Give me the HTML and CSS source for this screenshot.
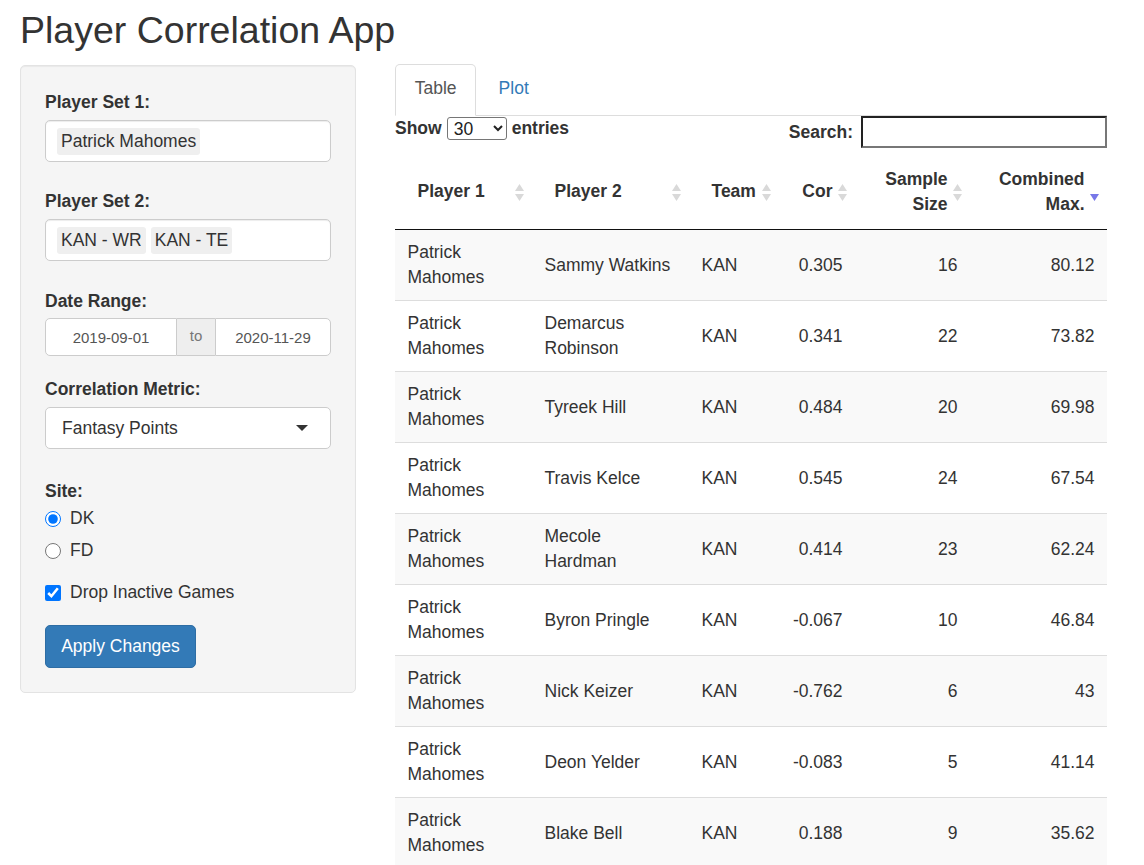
FILE: index.html
```html
<!DOCTYPE html>
<html>
<head>
<meta charset="utf-8">
<title>Player Correlation App</title>
<link rel="stylesheet" href="styles.css">
</head>
<body>
<div class="page">
  <h1 class="title">Player Correlation App</h1>
  <div class="layout">
    <aside class="well">
      <div class="label lbl-first">Player Set 1:</div>
      <div class="selectize">
        <span class="chip">Patrick Mahomes</span>
      </div>

      <div class="label lbl-set2">Player Set 2:</div>
      <div class="selectize">
        <span class="chip">KAN - WR</span><span class="chip">KAN - TE</span>
      </div>

      <div class="label lbl-date">Date Range:</div>
      <div class="daterange">
        <div class="date d1">2019-09-01</div>
        <div class="date-addon">to</div>
        <div class="date d2">2020-11-29</div>
      </div>

      <div class="label lbl-metric">Correlation Metric:</div>
      <div class="select-box">
        <span>Fantasy Points</span>
        <span class="caret"></span>
      </div>

      <div class="label lbl-site">Site:</div>
      <label class="option opt-dk"><input type="radio" name="site" checked> <span>DK</span></label>
      <label class="option opt-fd"><input type="radio" name="site"> <span>FD</span></label>
      <label class="option opt-check"><input type="checkbox" checked> <span>Drop Inactive Games</span></label>

      <button class="btn">Apply Changes</button>
    </aside>

    <main class="main">
      <ul class="tabs">
        <li class="tab active">Table</li>
        <li class="tab link">Plot</li>
      </ul>

      <div class="dt-controls">
        <div class="dt-length">
          <span>Show</span>
          <select class="len-select"><option>30</option></select>
          <span>entries</span>
        </div>
        <div class="dt-filter">
          <span>Search:</span>
          <input class="search" type="text">
        </div>
      </div>

      <table class="dt">
        <colgroup>
          <col class="w1"><col class="w2"><col class="w3"><col class="w4"><col class="w5"><col class="w6">
        </colgroup>
        <thead>
          <tr>
            <th class="l">Player 1<svg class="sort" viewBox="0 0 9 17"><path d="M0 7L4.5 0L9 7Z"/><path d="M0 10H9L4.5 17Z"/></svg></th>
            <th class="l">Player 2<svg class="sort" viewBox="0 0 9 17"><path d="M0 7L4.5 0L9 7Z"/><path d="M0 10H9L4.5 17Z"/></svg></th>
            <th class="l">Team<svg class="sort" viewBox="0 0 9 17"><path d="M0 7L4.5 0L9 7Z"/><path d="M0 10H9L4.5 17Z"/></svg></th>
            <th class="r">Cor<svg class="sort" viewBox="0 0 9 17"><path d="M0 7L4.5 0L9 7Z"/><path d="M0 10H9L4.5 17Z"/></svg></th>
            <th class="r">Sample Size<svg class="sort" viewBox="0 0 9 17"><path d="M0 7L4.5 0L9 7Z"/><path d="M0 10H9L4.5 17Z"/></svg></th>
            <th class="r">Combined Max.<svg class="sort desc" viewBox="0 0 9 17"><path d="M0 10H9L4.5 17Z"/></svg></th>
          </tr>
        </thead>
        <tbody>
          <tr><td>Patrick Mahomes</td><td>Sammy Watkins</td><td>KAN</td><td class="r">0.305</td><td class="r">16</td><td class="r">80.12</td></tr>
          <tr><td>Patrick Mahomes</td><td>Demarcus Robinson</td><td>KAN</td><td class="r">0.341</td><td class="r">22</td><td class="r">73.82</td></tr>
          <tr><td>Patrick Mahomes</td><td>Tyreek Hill</td><td>KAN</td><td class="r">0.484</td><td class="r">20</td><td class="r">69.98</td></tr>
          <tr><td>Patrick Mahomes</td><td>Travis Kelce</td><td>KAN</td><td class="r">0.545</td><td class="r">24</td><td class="r">67.54</td></tr>
          <tr><td>Patrick Mahomes</td><td>Mecole Hardman</td><td>KAN</td><td class="r">0.414</td><td class="r">23</td><td class="r">62.24</td></tr>
          <tr><td>Patrick Mahomes</td><td>Byron Pringle</td><td>KAN</td><td class="r">-0.067</td><td class="r">10</td><td class="r">46.84</td></tr>
          <tr><td>Patrick Mahomes</td><td>Nick Keizer</td><td>KAN</td><td class="r">-0.762</td><td class="r">6</td><td class="r">43</td></tr>
          <tr><td>Patrick Mahomes</td><td>Deon Yelder</td><td>KAN</td><td class="r">-0.083</td><td class="r">5</td><td class="r">41.14</td></tr>
          <tr><td>Patrick Mahomes</td><td>Blake Bell</td><td>KAN</td><td class="r">0.188</td><td class="r">9</td><td class="r">35.62</td></tr>
        </tbody>
      </table>
    </main>
  </div>
</div>
</body>
</html>
```

FILE: styles.css
```css
html, body {
  margin: 0;
  padding: 0;
  overflow: hidden;
  background: #fff;
}
body {
  font-family: "Liberation Sans", Arial, sans-serif;
  font-size: 17.5px;
  line-height: 25px;
  color: #333;
}
.page {
  padding: 10px 0 0 20px;
}
.title {
  margin: 0 0 14px 0;
  font-size: 37.5px;
  line-height: 41px;
  font-weight: 500;
  color: #333;
}
.layout {
  display: flex;
  align-items: flex-start;
  gap: 39px;
}

/* sidebar */
.well {
  box-sizing: border-box;
  width: 336px;
  background: #f5f5f5;
  border: 1px solid #e3e3e3;
  border-radius: 5px;
  padding: 24px 24px 24px 24px;
  box-shadow: inset 0 1px 1px rgba(0,0,0,0.05);
  display: flex;
  flex-direction: column;
  align-items: stretch;
}
.label {
  font-weight: bold;
  line-height: 25px;
  margin-bottom: 5px;
}
.lbl-set2 { margin-top: 27px; }
.lbl-date { margin-top: 28px; margin-bottom: 4px; }
.lbl-metric { margin-top: 21px; }
.lbl-site { margin-top: 30px; margin-bottom: 2px; }

.selectize {
  box-sizing: border-box;
  height: 42px;
  background: #fff;
  border: 1px solid #ccc;
  border-radius: 5px;
  padding: 0 11px;
  display: flex;
  align-items: center;
  gap: 5px;
  box-shadow: inset 0 1px 1px rgba(0,0,0,0.075);
}
.chip {
  background: #efefef;
  border-radius: 3px;
  padding: 1px 4px 1px 4px;
  line-height: 25px;
  color: #333;
}

.daterange {
  display: flex;
  height: 38px;
}
.date {
  box-sizing: border-box;
  background: #fff;
  border: 1px solid #ccc;
  font-size: 15px;
  color: #555;
  display: flex;
  align-items: center;
  justify-content: center;
}
.d1 {
  width: 132px;
  border-radius: 5px 0 0 5px;
}
.d2 {
  flex: 1;
  border-radius: 0 5px 5px 0;
}
.date-addon {
  box-sizing: border-box;
  width: 38px;
  background: #eee;
  border-top: 1px solid #ccc;
  border-bottom: 1px solid #ccc;
  font-size: 15px;
  color: #777;
  display: flex;
  align-items: center;
  justify-content: center;
  padding-bottom: 3px;
}

.select-box {
  box-sizing: border-box;
  height: 42px;
  background: #fff;
  border: 1px solid #ccc;
  border-radius: 5px;
  padding: 0 22px 0 16px;
  display: flex;
  align-items: center;
  justify-content: space-between;
}
.caret {
  width: 0;
  height: 0;
  border-left: 6px solid transparent;
  border-right: 6px solid transparent;
  border-top: 6px solid #333;
}

.option {
  display: flex;
  align-items: center;
  gap: 9px;
  line-height: 25px;
  height: 25px;
}
.option input {
  margin: 0;
  width: 16px;
  height: 16px;
}
.opt-fd { margin-top: 7px; }
.opt-check { margin-top: 17px; }

.btn {
  align-self: flex-start;
  margin-top: 20px;
  box-sizing: border-box;
  height: 43px;
  width: 151px;
  background: #337ab7;
  border: 1px solid #2e6da4;
  border-radius: 5px;
  color: #fff;
  font-family: "Liberation Sans", Arial, sans-serif;
  font-size: 17.5px;
  line-height: 25px;
  padding: 0;
}

/* main */
.main {
  width: 712px;
  margin-top: -1px;
}
.tabs {
  list-style: none;
  margin: 0;
  padding: 0;
  display: flex;
  gap: 2.5px;
  border-bottom: 1px solid #ddd;
  height: 51px;
}
.tab {
  box-sizing: border-box;
  height: 52px;
  padding: 10.5px 18.75px 14.5px;
  border: 1px solid transparent;
  border-radius: 5px 5px 0 0;
  line-height: 25px;
}
.tab.active {
  border-color: #ddd;
  border-bottom-color: transparent;
  background: #fff;
  color: #555;
}
.tab.link {
  color: #337ab7;
}

.dt-controls {
  display: flex;
  justify-content: space-between;
  align-items: flex-start;
  height: 32px;
  font-weight: bold;
}
.dt-length {
  display: flex;
  align-items: center;
  gap: 5px;
  height: 25px;
}
.len-select {
  width: 60px;
  height: 23px;
  font-family: "Liberation Sans", Arial, sans-serif;
  font-size: 17.5px;
  color: #222;
  border: 1px solid #767676;
  border-radius: 3px;
  background: #fff;
  padding: 0 0 0 2px;
}
.dt-filter {
  display: flex;
  align-items: center;
  height: 32px;
  gap: 8px;
}
.search {
  box-sizing: border-box;
  width: 246px;
  height: 32px;
  margin: 0;
  border-top: 2px solid #222;
  border-left: 2px solid #222;
  border-right: 2px solid #777;
  border-bottom: 2px solid #777;
  background: #fff;
  padding: 0 4px;
}

.dt {
  width: 712px;
  table-layout: fixed;
  border-collapse: collapse;
  margin-top: 6px;
}
.w1 { width: 137px; }
.w2 { width: 157px; }
.w3 { width: 90px; }
.w4 { width: 76px; }
.w5 { width: 115px; }
.w6 { width: 137px; }

.dt th {
  position: relative;
  padding: 12.5px 22.5px;
  font-weight: bold;
  line-height: 25px;
  vertical-align: middle;
  border-bottom: 1px solid #111;
  white-space: normal;
}
.dt th.l { text-align: left; }
.dt th.r { text-align: right; }
.sort {
  position: absolute;
  right: 8px;
  top: 50%;
  width: 9px;
  height: 17px;
  margin-top: -8px;
  fill: #d9d9d9;
}
.sort.desc {
  right: 8px;
  fill: #7777e8;
}
.dt td {
  padding: 10px 12.5px;
  line-height: 25px;
  vertical-align: middle;
  border-bottom: 1px solid #ddd;
  height: 50px;
}
.dt td.r { text-align: right; }
.dt tbody tr:nth-child(odd) td { background: #f9f9f9; }
```
